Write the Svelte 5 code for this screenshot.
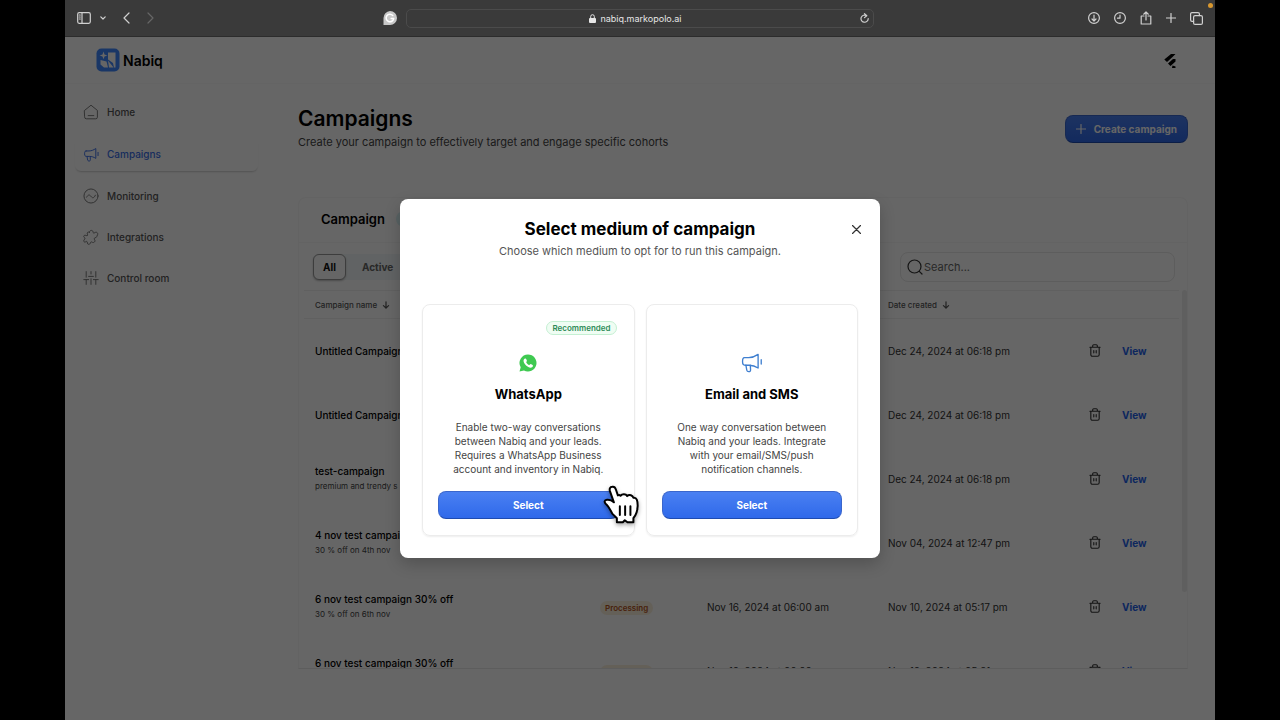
<script>
  let search = $state("");
  let tab = $state("All");

  const nav = ["Home", "Campaigns", "Monitoring", "Integrations", "Control room"];

  const rows = [
    { name: "Untitled Campaign", created: "Dec 24, 2024 at 06:18 pm" },
    { name: "Untitled Campaign", created: "Dec 24, 2024 at 06:18 pm" },
    { name: "test-campaign", note: "premium and trendy s", created: "Dec 24, 2024 at 06:18 pm" },
    { name: "4 nov test campaign", note: "30 % off on 4th nov", created: "Nov 04, 2024 at 12:47 pm" },
    { name: "6 nov test campaign 30% off", note: "30 % off on 6th nov", status: "Processing", scheduled: "Nov 16, 2024 at 06:00 am", created: "Nov 10, 2024 at 05:17 pm" },
    { name: "6 nov test campaign 30% off", note: "30 % off on 6th nov", status: "Processing", scheduled: "Nov 10, 2024 at 06:00 am", created: "Nov 10, 2024 at 05:21 pm" }
  ];

  const mediums = [
    {
      title: "WhatsApp",
      tag: "Recommended",
      lines: ["Enable two-way conversations", "between Nabiq and your leads.", "Requires a WhatsApp Business", "account and inventory in Nabiq."]
    },
    {
      title: "Email and SMS",
      lines: ["One way conversation between", "Nabiq and your leads. Integrate", "with your email/SMS/push", "notification channels."]
    }
  ];
</script>

{#snippet megaphone()}
  <path d="M3.800 6.200h3.700c3 0 6-1.300 8.500-3v12.300c-2.500-1.700-5-2.500-8-2.500h-3.500c-2 0-2.500-1-2.500-3.200s.300-3.600 1.800-3.600z" />
  <path d="M5 13l.8 4.500c.4 1.800 3.600 1.800 3.400-.3L9 13M18.800 8v4" />
{/snippet}

{#snippet arrow()}
  <svg class="arrow" viewBox="0 0 10 10"><path d="M5 1v8M1.800 5.800L5 9l3.200-3.200" /></svg>
{/snippet}

<div class="frame">
  <div class="window">
    <header class="toolbar">
      <div class="tools">
        <button aria-label="Sidebar"><svg width="14" height="12" viewBox="0 0 14 12"><rect x=".7" y=".7" width="12.600" height="10.600" rx="1.500" /><path d="M5 1v10M2.300 3h1M2.300 5h1M2.300 7h1" /></svg></button>
        <button aria-label="Tab groups"><svg width="6" height="4" viewBox="0 0 6 4"><path d="M.8 .8L3 3 5.200.8" /></svg></button>
        <button class="back" aria-label="Back"><svg width="7" height="12" viewBox="0 0 7 12"><path d="M6 1L1 6l5 5" /></svg></button>
        <button class="dim" aria-label="Forward"><svg width="7" height="12" viewBox="0 0 7 12"><path d="M1 1l5 5-5 5" /></svg></button>
        <button class="grammar" aria-label="Grammarly"><svg class="solid" width="14" height="14" viewBox="0 0 14 14"><path class="g-bg" d="M7 0a7 7 0 1 1 0 14H.500V7A7 7 0 0 1 7 0z" /><path class="g-fg" d="M9.800 4.500A3.800 3.800 0 1 0 10.700 7.500H8.200" /></svg></button>
      </div>
      <div class="address">
        <span class="host">
          <svg class="solid" width="7" height="9" viewBox="0 0 7 9"><rect y="4" width="7" height="5" rx="1" /><path class="shackle" d="M1.700 4V2.500a1.800 1.800 0 0 1 3.600 0V4" /></svg>
          nabiq.markopolo.ai
        </span>
        <button aria-label="Reload"><svg width="9" height="10" viewBox="0 0 9 10"><path d="M6.500 2.600A3.600 3.600 0 1 0 8.200 5.600M4.500.7L6.800 2.700 4.500 4.600" /></svg></button>
      </div>
      <div class="tools right">
        <button aria-label="Downloads"><svg width="12" height="12" viewBox="0 0 12 12"><circle cx="6" cy="6" r="5.400" /><path d="M6 3v6M4 7l2 2 2-2" /></svg></button>
        <button aria-label="History"><svg width="12" height="12" viewBox="0 0 12 12"><circle cx="6" cy="6" r="5.400" /><path d="M6 3v3.200H3.500" /></svg></button>
        <button aria-label="Share"><svg width="12" height="14" viewBox="0 0 12 14"><path d="M4 5H1.200v8h9.600V5H8M6 9V1M3.700 3.200L6 1l2.300 2.200" /></svg></button>
        <button aria-label="New tab"><svg width="10" height="10" viewBox="0 0 10 10"><path d="M5 .5v9M.500 5h9" /></svg></button>
        <button aria-label="Tabs"><svg width="13" height="13" viewBox="0 0 13 13"><rect x="3.600" y="3.600" width="8.800" height="8.800" rx="1.500" /><path d="M3.600 9.400H2A1.400 1.400 0 0 1 .6 8V2A1.400 1.400 0 0 1 2 .6h6A1.400 1.400 0 0 1 9.400 2v1.600" /></svg></button>
      </div>
      <span class="mic"></span>
    </header>

    <div class="app">
      <div class="topbar">
        <div class="brand">
          <svg width="24" height="24" viewBox="0 0 24 24">
            <rect class="mark" x=".5" y=".5" width="23" height="23" rx="5" />
            <path class="glyph" d="M12 4.500h7.500V19.500l-1.500 0L17 15l-5-3.500zM4.500 12l6 1.500 1.500 6H8L4.500 16.500zM12 12.500l5.500 7H13zM7.500 3.500l1 2.900 2.900 1-2.900 1-1 2.900-1-2.900-2.900-1 2.900-1z" />
          </svg>
          <strong>Nabiq</strong>
        </div>
        <svg class="account" width="12" height="15" viewBox="0 0 12 15"><path d="M7 1h4.500L8.500 4 3 9 .300 6.500zM9 6h2.500v2.500L6.500 13 4 10.500zM8.500 12.500l3 1v1.500H8z" /></svg>
      </div>

      <div class="body">
        <nav>
          {#each nav as item}
            <a href="#{item}" class:active={item === "Campaigns"}>
              <svg width="16" height="16" viewBox="0 0 20 20">
                {#if item === "Home"}
                  <path d="M2 8l8-6.500L18 8v8.500a2 2 0 0 1-2 2H4a2 2 0 0 1-2-2zM6.500 14.500h7" />
                {:else if item === "Campaigns"}
                  {@render megaphone()}
                {:else if item === "Monitoring"}
                  <circle cx="10" cy="10" r="8.800" /><path d="M4.500 11.500c2-3.500 3.500-3.500 5.500-1s3.500 2.500 5.500-1.500" />
                {:else if item === "Integrations"}
                  <path d="M8 4c0-3 4.500-3 4.500-.3 0 1.300 1 1.800 2.500.8 2-1.500 4.500 1 3 3-1 1.500-.500 2.500-1.500 3-2 .5-3.500 1.500-2 3 1.500 1.800-1 4.500-3 3-1.500-1-2 0-2.500 1.500-.800 2-3.500 1.300-3.500-.5 0-2-1-2.500-2-1.500-2 1.300-3.500-1-2-2.500C3 12 2.500 11 1.500 10.500 0 9.500 1.500 7 3.500 8 5.500 8.800 6.500 8 5.500 6.500 4.500 4.500 6.500 3 8 4z" />
                {:else}
                  <path d="M4 2v7M1 12h6M4 12v6M10 2v3M7 8h6M10 11v7M16 2v7M13 12h6M16 12v6" />
                {/if}
              </svg>
              {item}
            </a>
          {/each}
        </nav>

        <main>
          <div class="heading">
            <div>
              <h1>Campaigns</h1>
              <p>Create your campaign to effectively target and engage specific cohorts</p>
            </div>
            <button class="primary create">
              <svg width="10" height="10" viewBox="0 0 10 10"><path d="M5 .5v9M.500 5h9" /></svg>
              Create campaign
            </button>
          </div>

          <section class="panel">
            <div class="panel-head">
              <h2>Campaign</h2>
              <span class="count"></span>
            </div>
            <div class="filters">
              <div class="tabs">
                {#each ["All", "Active"] as name}
                  <button class:on={tab === name} onclick={() => (tab = name)}>{name}</button>
                {/each}
              </div>
              <label class="search">
                <svg width="16" height="16" viewBox="0 0 16 16"><circle cx="7.500" cy="7.500" r="6.500" /><path d="M12.300 12.300L15 15" /></svg>
                <input type="text" aria-label="Search" placeholder="Search..." bind:value={search} />
              </label>
            </div>
            <div class="scroller">
              <table>
                <colgroup><col class="c-name" /><col class="c-status" /><col class="c-date" /><col class="c-created" /><col class="c-del" /><col /></colgroup>
                <thead>
                  <tr><th>Campaign name {@render arrow()}</th><th></th><th></th><th>Date created {@render arrow()}</th><th></th><th></th></tr>
                </thead>
                <tbody>
                  {#each rows as row}
                    <tr>
                      <td><b>{row.name}</b>{#if row.note}<small>{row.note}</small>{/if}</td>
                      <td>{#if row.status}<span class="status">{row.status}</span>{/if}</td>
                      <td>{row.scheduled ?? ""}</td>
                      <td>{row.created}</td>
                      <td>
                        <button class="trash" aria-label="Delete"><svg width="12" height="13" viewBox="0 0 12 14"><path d="M.500 3.500h11M3.500 3.500V2A1.200 1.200 0 0 1 4.700.8h2.600A1.200 1.200 0 0 1 8.500 2v1.500M1.500 3.500v8A1.700 1.700 0 0 0 3.200 13.200h5.600a1.700 1.700 0 0 0 1.700-1.700v-8M4.700 7v2.500M7.300 7v2.500" /></svg></button>
                      </td>
                      <td><a href="#view">View</a></td>
                    </tr>
                  {/each}
                </tbody>
              </table>
              <span class="thumb"></span>
            </div>
          </section>
        </main>
      </div>

      <div class="overlay">
        <div class="modal" role="dialog" aria-labelledby="medium-title">
          <button class="close" aria-label="Close"><svg width="9" height="9" viewBox="0 0 9 9"><path d="M.500.500l8 8M8.500.500l-8 8" /></svg></button>
          <h2 id="medium-title">Select medium of campaign</h2>
          <p class="sub">Choose which medium to opt for to run this campaign.</p>
          <div class="mediums">
            {#each mediums as medium}
              <article>
                <div class="tag-row">{#if medium.tag}<span class="tag">{medium.tag}</span>{/if}</div>
                {#if medium.tag}
                  <svg width="20" height="20" viewBox="0 0 20 20">
                    <path class="wa" d="M10 1.500a8.500 8.500 0 1 1-4 16L1.500 18.500l1.200-4.200A8.500 8.500 0 0 1 10 1.500z" />
                    <path class="phone" d="M7 5.500c.7-.3 1 .1 1.300.8l.6 1.400c.2.600-.8 1.200-.7 1.500.7 1.400 1.700 2.300 3.100 2.900.4.100 1-1.200 1.500-1l1.800.9c.6.300.400 1.700-.5 2.300-1.700 1.100-4.200-.1-6-1.800C6.200 10.700 5 8.300 5.700 6.700c.3-.6.700-1 1.300-1.200z" />
                  </svg>
                {:else}
                  <svg class="mega" width="22" height="20" viewBox="1 2 19 18">{@render megaphone()}</svg>
                {/if}
                <h3>{medium.title}</h3>
                <p>{#each medium.lines as line, i}{#if i}<br />{/if}{line}{/each}</p>
                <button class="primary">Select</button>
              </article>
            {/each}
          </div>
          <svg class="pointer" width="37" height="40" viewBox="0 0 112 120">
            <path d="M28 5C21 5 19 11 21 18l12 34c-5-5-12-9-21-8-8 1-9 7-4 12 9 7 14 19 20 30l14 14v12h18l6-6 8 6h18v-12c9-12 13-24 13-38 0-15-3-26-13-24-2-7-12-11-19-5-4-7-15-7-20-1-2-2-6-2-8-1l-6-18C37 7 33 4 28 5z" />
            <path d="M51 64v26M67 64v26M83 64v26" />
          </svg>
        </div>
      </div>
    </div>
  </div>
</div>

<style>
  :global(body) {
    margin: 0;
    background: #000;
  }

  .frame {
    height: 100vh;
    padding: 0 65px;
    overflow: hidden;
    font-family: Inter, "Liberation Sans", sans-serif;
    font-size: 10px;
    color: #333;
  }

  .frame, .frame * {
    box-sizing: border-box;
  }

  .window {
    height: 100%;
    display: flex;
    flex-direction: column;
  }

  h1, h2, h3, p {
    margin: 0;
  }

  button {
    padding: 0;
    border: 0;
    background: none;
    color: inherit;
    font: inherit;
    cursor: pointer;
  }

  svg {
    display: block;
    flex: none;
    fill: none;
    stroke: currentColor;
    stroke-width: 1.2;
    stroke-linecap: round;
    stroke-linejoin: round;
  }

  /* browser toolbar */
  .toolbar {
    position: relative;
    height: 37px;
    flex: none;
    display: grid;
    grid-template-columns: 1fr 468px 1fr;
    gap: 9px;
    align-items: center;
    padding: 0 12px;
    background: #3a3a3a;
    border-bottom: 1px solid #2c2c2c;
    color: #d0d0d0;
  }

  .tools {
    display: flex;
    align-items: center;
    gap: 9px;
  }

  .tools .back {
    margin: 0 8px;
  }

  .tools .dim {
    color: #666;
  }

  .tools .grammar {
    margin-left: auto;
  }

  .tools.right {
    justify-content: flex-end;
    gap: 14px;
  }

  .solid {
    fill: currentColor;
    stroke: none;
  }

  .g-bg {
    fill: #c8c8c8;
  }

  .g-fg, .shackle {
    fill: none;
    stroke: #fff;
    stroke-width: 1.5;
  }

  .shackle {
    stroke: currentColor;
    stroke-width: 1;
  }

  .address {
    height: 19px;
    display: flex;
    align-items: center;
    padding: 0 4px;
    border: 1px solid #4b4b4b;
    border-radius: 5px;
  }

  .host {
    flex: 1;
    display: flex;
    justify-content: center;
    align-items: center;
    gap: 4px;
    font-size: 9px;
    color: #e6e6e6;
  }

  .mic {
    position: absolute;
    top: 3px;
    right: 2px;
    width: 5px;
    height: 5px;
    border-radius: 50%;
    background: #d9982f;
  }

  /* page */
  .app {
    position: relative;
    flex: 1;
    min-height: 0;
    overflow: hidden;
    background: #fff;
  }

  .topbar {
    height: 47px;
    display: flex;
    align-items: center;
    justify-content: space-between;
    padding: 0 39px 0 31px;
    border-bottom: 1px solid #fafafa;
  }

  .brand {
    display: flex;
    align-items: center;
    gap: 3px;
    font-size: 14px;
    color: #000;
  }

  .brand strong {
    font-weight: 600;
  }

  .brand svg, .account {
    stroke: none;
  }

  .mark {
    fill: #4088ff;
  }

  .glyph {
    fill: #fff;
  }

  .account {
    fill: #000;
  }

  .body {
    display: grid;
    grid-template-columns: 193px 1fr;
    gap: 40px;
    padding-right: 27px;
  }

  nav {
    display: flex;
    flex-direction: column;
    gap: 9px;
    padding: 12px 0 0 10px;
  }

  nav a {
    height: 32px;
    display: flex;
    align-items: center;
    gap: 8px;
    padding: 0 8px;
    border-radius: 6px;
    color: #555;
    text-decoration: none;
    font-weight: 500;
  }

  nav a svg {
    color: #777;
  }

  nav a.active {
    height: 34px;
    box-shadow: 0 2px 2px -1px #ccc;
  }

  nav a.active, nav a.active svg {
    color: #3b6fe8;
  }

  main {
    padding-top: 22px;
  }

  .heading {
    display: flex;
    justify-content: space-between;
    align-items: center;
  }

  h1 {
    font-size: 21px;
    line-height: 26px;
    font-weight: 600;
    color: #000;
  }

  .heading p {
    font-size: 11px;
    line-height: 20px;
    color: #444;
  }

  .primary {
    height: 28px;
    border-radius: 8px;
    border: 1px solid #3a66cc;
    border-bottom-color: #1e4bb0;
    background: linear-gradient(#4a80f2, #2f69ea);
    color: #fff;
    font-weight: 700;
  }

  .create {
    display: flex;
    align-items: center;
    gap: 8px;
    padding: 0 10px;
  }

  .panel {
    height: 472px;
    display: flex;
    flex-direction: column;
    margin-top: 45px;
    border: 1px solid #f7f7f7;
    border-bottom-color: #e8e8e8;
    border-radius: 8px 8px 0 0;
  }

  .panel-head {
    height: 45px;
    display: flex;
    align-items: center;
    gap: 11px;
    padding: 0 22px 3px;
    border-bottom: 1px solid #f8f8f8;
  }

  h2 {
    font-size: 13px;
    font-weight: 600;
    color: #000;
  }

  .count {
    width: 24px;
    height: 16px;
    border-radius: 8px;
    background: #dcf5f8;
  }

  .filters {
    height: 47px;
    display: flex;
    justify-content: space-between;
    align-items: center;
    padding: 0 12px 0 14px;
  }

  .tabs {
    display: flex;
    border-radius: 6px;
    background: #f2f8f9;
  }

  .tabs button {
    height: 26px;
    padding: 0 16px;
    color: #666;
    font-weight: 700;
  }

  .tabs .on {
    padding: 0 9px;
    border: 1px solid #999;
    border-radius: 6px;
    background: #fff;
    color: #111;
    box-shadow: 0 1px 2px #bbb;
  }

  .search {
    width: 275px;
    height: 30px;
    display: flex;
    align-items: center;
    padding: 0 6px;
    border: 1px solid #e8e8e8;
    border-radius: 8px;
  }

  .search input {
    flex: 1;
    min-width: 0;
    padding: 0 1px;
    border: 0;
    outline: 0;
    background: none;
    font: inherit;
    font-size: 11px;
  }

  .search input::placeholder {
    color: #666;
  }

  .scroller {
    position: relative;
    flex: 1;
    min-height: 0;
    overflow: hidden;
    padding: 0 8px 0 5px;
  }

  table {
    width: 100%;
    table-layout: fixed;
    border-collapse: collapse;
  }

  .c-name {
    width: 285px;
  }

  .c-status {
    width: 107px;
  }

  .c-date {
    width: 181px;
  }

  .c-created {
    width: 201px;
  }

  .c-del {
    width: 33px;
  }

  th {
    height: 28px;
    padding: 0 11px;
    border-top: 1px solid #f0f0f0;
    border-bottom: 1px solid #f0f0f0;
    text-align: left;
    font-size: 8px;
    font-weight: 500;
    color: #555;
  }

  .arrow {
    display: inline-block;
    width: 8px;
    height: 8px;
    margin-left: 3px;
    vertical-align: middle;
    stroke-width: 1.5;
  }

  td {
    height: 64px;
    padding: 0 11px;
    white-space: nowrap;
    font-size: 10px;
  }

  td b {
    display: block;
    line-height: 14px;
    font-weight: 500;
    color: #000;
  }

  td small {
    display: block;
    line-height: 16px;
    font-size: 8px;
    color: #444;
  }

  td a {
    color: #2563eb;
    font-weight: 700;
    text-decoration: none;
  }

  .trash {
    display: block;
  }

  .status {
    padding: 2px 5px;
    border-radius: 8px;
    background: #fbf0dd;
    color: #b4541a;
    font-size: 8px;
    font-weight: 600;
  }

  .thumb {
    position: absolute;
    top: 0;
    right: 0;
    width: 5px;
    height: 302px;
    border-radius: 3px;
    background: #eee;
  }

  .overlay {
    position: absolute;
    inset: 0;
    display: flex;
    align-items: center;
    justify-content: center;
    background: rgba(0, 0, 0, 0.6);
  }

  .modal {
    position: relative;
    width: 480px;
    padding: 18px 22px 22px;
    border-radius: 8px;
    background: #fff;
    text-align: center;
    box-shadow: 0 6px 16px rgba(0, 0, 0, 0.2);
  }

  .modal h2 {
    font-size: 17px;
    line-height: 24px;
    font-weight: 700;
  }

  .sub {
    margin-top: 2px;
    font-size: 11px;
    line-height: 16px;
    color: #555;
  }

  .close {
    position: absolute;
    top: 26px;
    right: 19px;
  }

  .mediums {
    display: grid;
    grid-template-columns: 1fr 1fr;
    gap: 11px;
    margin-top: 45px;
  }

  article {
    display: flex;
    flex-direction: column;
    align-items: center;
    padding: 16px 15px;
    border: 1px solid #ececec;
    border-radius: 8px;
    box-shadow: 0 1px 2px #eee;
  }

  .tag-row {
    height: 14px;
    align-self: stretch;
    display: flex;
    justify-content: flex-end;
    margin-bottom: 18px;
    padding-right: 2px;
  }

  .tag {
    padding: 0 5px;
    border: 1px solid #c5f0d3;
    border-radius: 7px;
    background: #effdf3;
    color: #2e8b57;
    font-size: 8px;
    line-height: 12px;
    font-weight: 600;
  }

  .wa {
    fill: #3fc951;
    stroke: none;
  }

  .phone {
    fill: #fff;
    stroke: none;
  }

  .mega {
    color: #3f7fd0;
  }

  h3 {
    margin: 11px 0 16px;
    font-size: 13px;
    line-height: 20px;
    font-weight: 700;
    color: #000;
  }

  article p {
    line-height: 14px;
    color: #444;
  }

  article .primary {
    align-self: stretch;
    margin-top: 15px;
  }

  .pointer {
    position: absolute;
    left: 203px;
    top: 286px;
    fill: #fff;
    stroke: #000;
    stroke-width: 6;
    filter: drop-shadow(0 2px 2px rgba(0, 0, 0, 0.35));
  }
</style>
